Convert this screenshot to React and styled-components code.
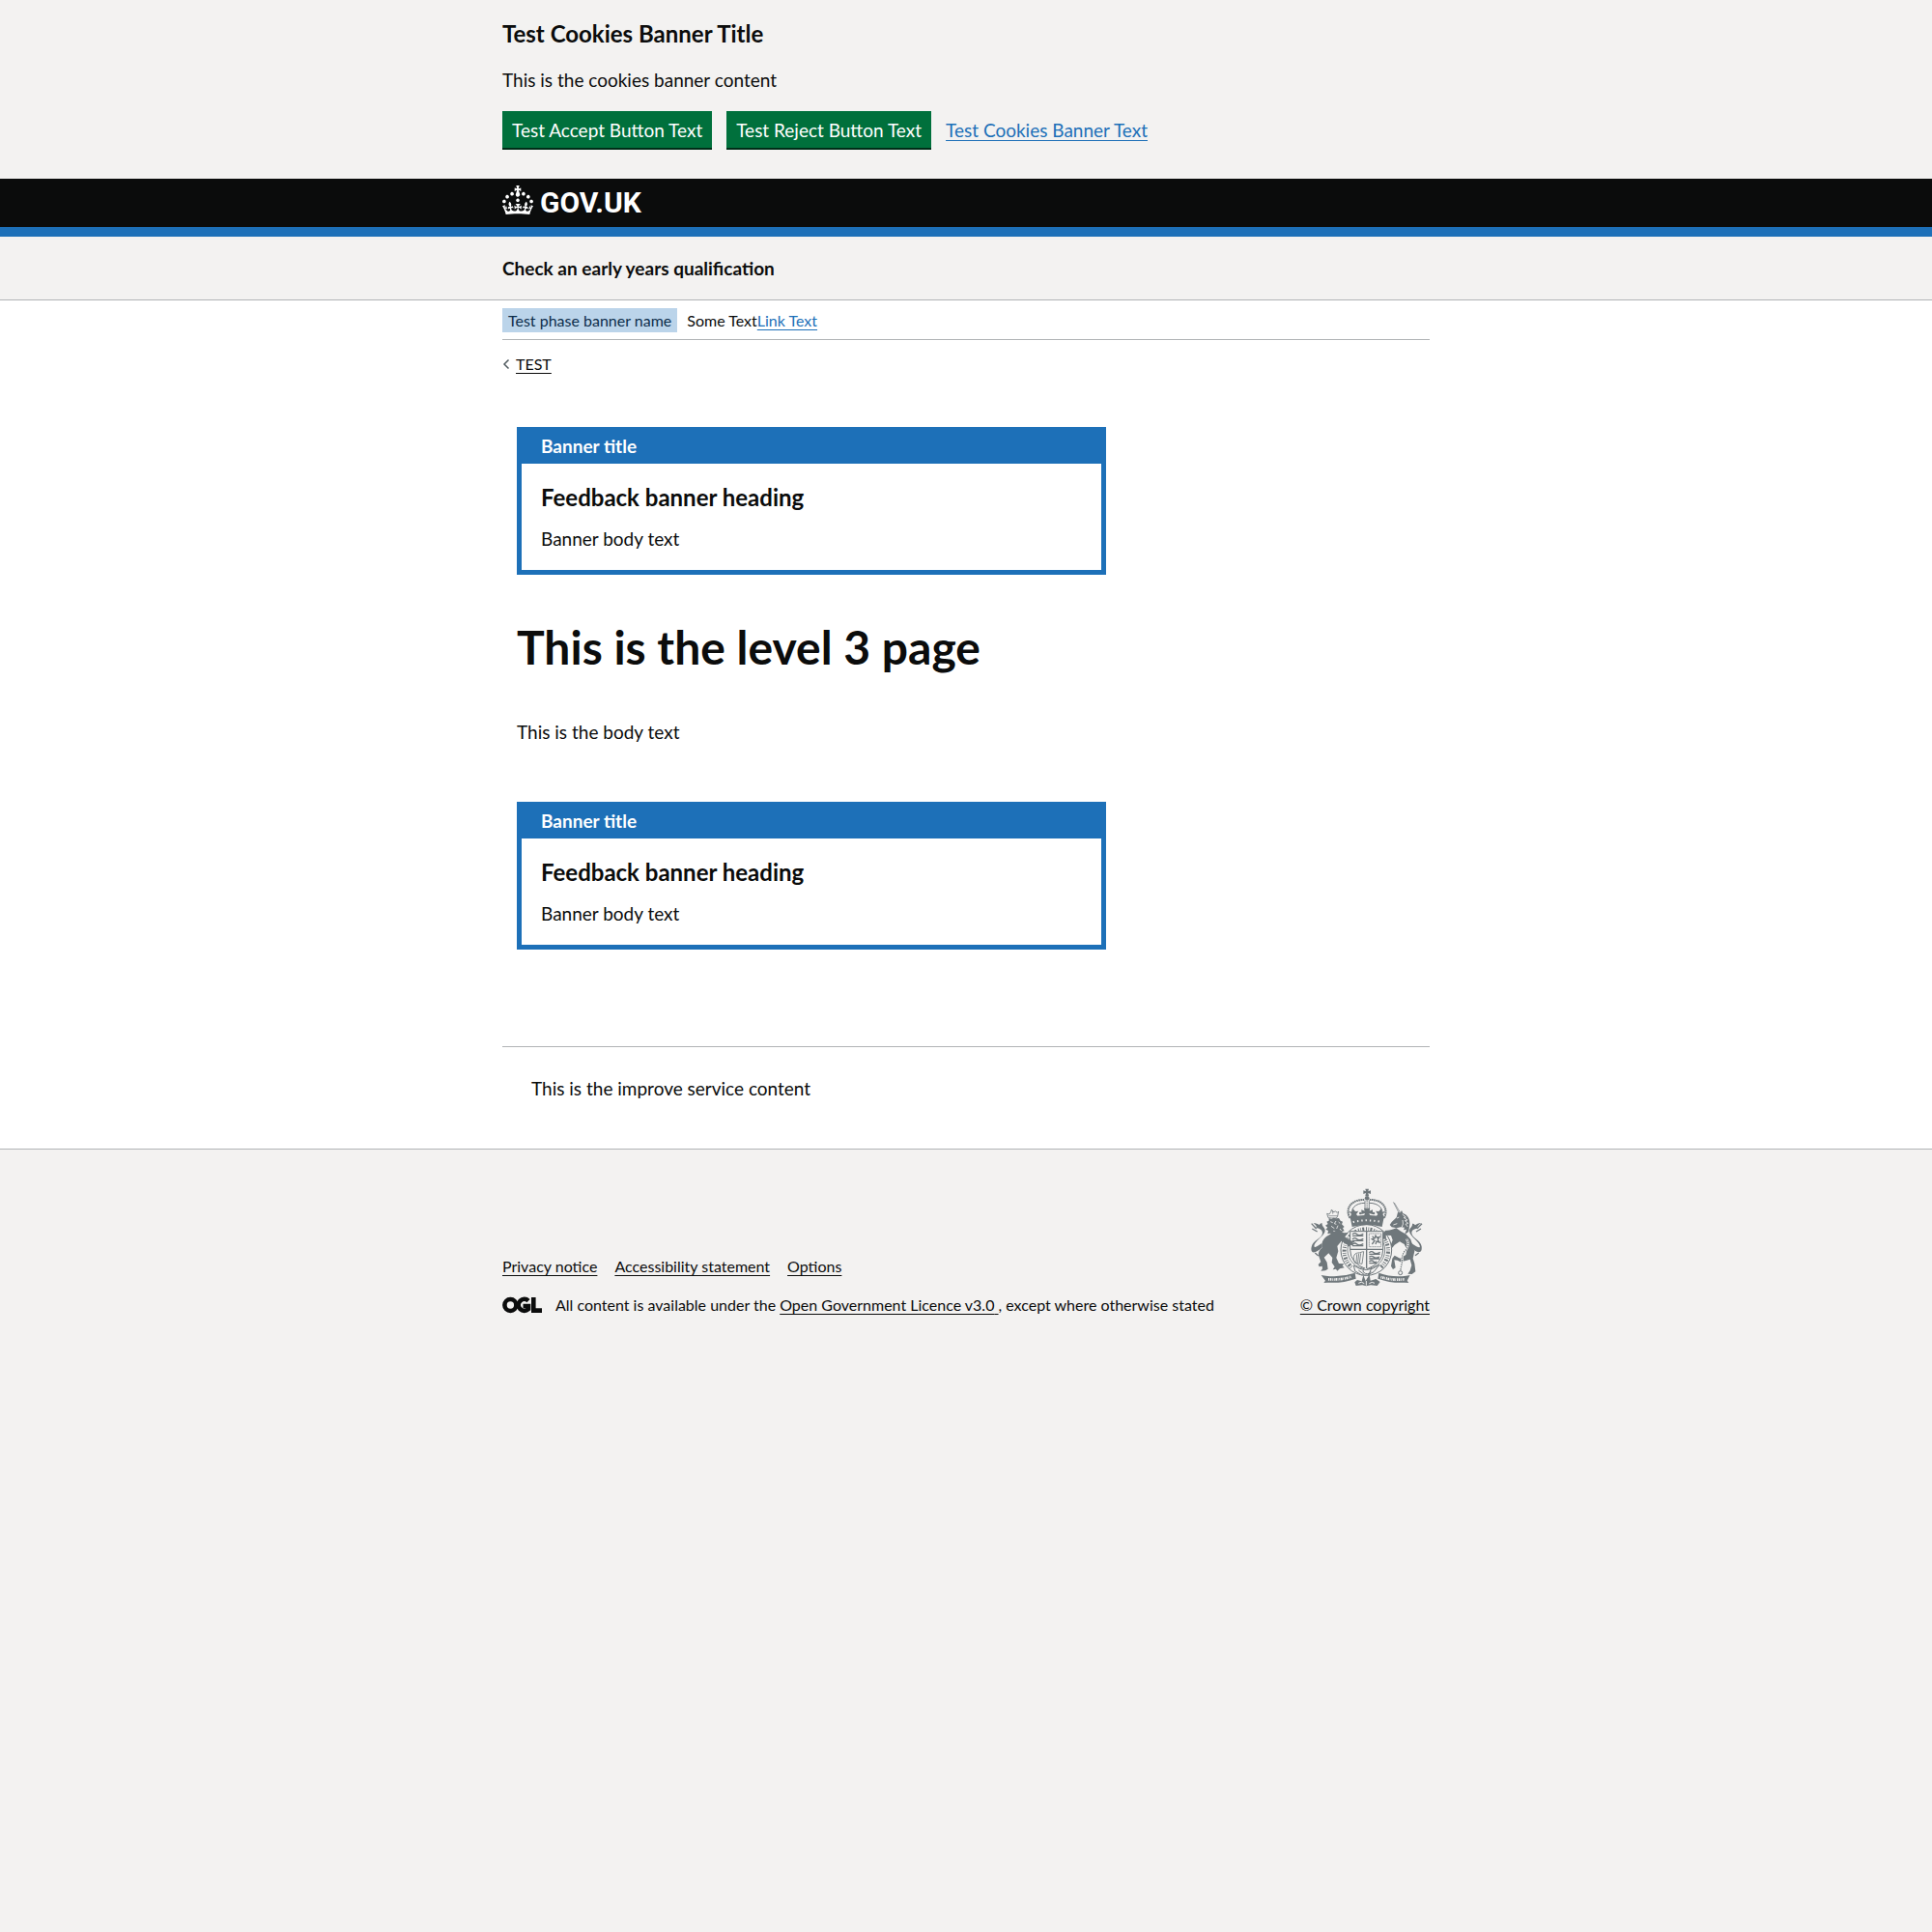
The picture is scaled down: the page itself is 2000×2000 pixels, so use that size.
import React from "react";
import styled, { createGlobalStyle, css } from "styled-components";

const color = {
  ink: "#0b0c0c",
  blue: "#1d70b8",
  grey: "#f3f2f1",
  line: "#b1b4b6",
  green: "#00703c",
  greenDark: "#002d18",
  tag: "#bbd4ea",
  tagInk: "#0c2d4a",
  crest: "#6f777b",
};

const GlobalStyle = createGlobalStyle`
  html { background: ${color.grey}; }
  body {
    margin: 0;
    background: #fff;
    color: ${color.ink};
    font-family: Lato, "Liberation Sans", sans-serif;
    font-size: 19px;
    line-height: 25px;
  }
  *, *::before, *::after { box-sizing: border-box; }
  h1, h2, h3, p, ul { margin: 0; padding: 0; }
`;

const Container = styled.div`
  max-width: 960px;
  margin: 0 auto;
`;

const linkStyle = css`
  color: ${(p) => (p.$plain ? color.ink : color.blue)};
  text-decoration: underline;
  text-decoration-thickness: 1px;
  text-underline-offset: 3px;
`;
const Link = styled.a`${linkStyle}`;

const Heading = styled.h2`
  font-size: 24px;
  line-height: 30px;
  font-weight: 700;
`;

const CookieBanner = styled.section`
  background: ${color.grey};
  padding: 20px 0 32px;
`;
const CookieInner = styled(Container)`
  display: flex;
  flex-direction: column;
  gap: 20px;
`;
const Actions = styled.div`
  display: flex;
  flex-wrap: wrap;
  align-items: center;
  gap: 15px;
`;
const Button = styled.button`
  border: 2px solid transparent;
  border-radius: 0;
  padding: 8px 8px 7px;
  background: ${color.green};
  color: #fff;
  box-shadow: 0 2px 0 ${color.greenDark};
  font: inherit;
  line-height: 19px;
  cursor: pointer;
`;

const Header = styled.header`
  background: ${color.ink};
  border-bottom: 10px solid ${color.blue};
`;
const HeaderInner = styled(Container)`
  display: flex;
  padding: 7px 0;
`;
const Logo = styled.a`
  display: flex;
  align-items: flex-start;
  gap: 7px;
  color: #fff;
  text-decoration: none;
  font-family: Roboto, "Liberation Sans", sans-serif;
  font-size: 30px;
  line-height: 36px;
  font-weight: 700;
`;

const ServiceBar = styled.div`
  background: ${color.grey};
  border-bottom: 1px solid ${color.line};
  padding: 20px 0;
  font-weight: 700;
`;

const PhaseBanner = styled.div`
  display: flex;
  align-items: center;
  gap: 10px;
  padding: 8px 0 7px;
  border-bottom: 1px solid ${color.line};
  font-size: 16px;
`;
const Tag = styled.strong`
  background: ${color.tag};
  color: ${color.tagInk};
  padding: 0 6px;
  font-weight: 400;
`;
const BackLink = styled.a`
  ${linkStyle}
  display: flex;
  width: fit-content;
  align-items: center;
  gap: 6px;
  margin-top: 15px;
  font-size: 16px;
  line-height: 20px;
`;

const Main = styled.main`
  display: flex;
  flex-direction: column;
  align-items: flex-start;
  padding: 55px 15px 100px;
`;
const Title = styled.h1`
  font-size: 48px;
  line-height: 50px;
  font-weight: 700;
  margin: 50px 0;
`;
const Body = styled.p`
  margin-bottom: 60px;
`;
const Notice = styled.section`
  width: 100%;
  max-width: 610px;
  border: 5px solid ${color.blue};
`;
const NoticeHeader = styled.h2`
  background: ${color.blue};
  color: #fff;
  padding: 2px 20px 6px;
  font-size: 19px;
  line-height: 25px;
  font-weight: 700;
`;
const NoticeContent = styled.div`
  display: flex;
  flex-direction: column;
  gap: 15px;
  padding: 20px;
`;
const Improve = styled.section`
  border-top: 1px solid ${color.line};
  padding: 30px 30px 50px;
`;

const Footer = styled.footer`
  background: ${color.grey};
  border-top: 1px solid ${color.line};
  padding: 40px 0;
  font-size: 16px;
  line-height: 20px;
`;
const FooterInner = styled(Container)`
  display: flex;
  justify-content: space-between;
  align-items: flex-end;
`;
const FooterMeta = styled.div`
  display: flex;
  flex-direction: column;
  gap: 20px;
`;
const FooterLinks = styled.ul`
  display: flex;
  flex-wrap: wrap;
  gap: 18px;
  list-style: none;
`;
const Licence = styled.div`
  display: flex;
  align-items: center;
  gap: 14px;
`;
const Crown = styled.a`
  ${linkStyle}
  display: flex;
  flex-direction: column;
  align-items: flex-end;
  gap: 9px;
`;

function CrownIcon() {
  return (
    <svg width="32" height="30" viewBox="0 0 32 30" fill="#fff" aria-hidden="true">
      <path d="M22.6 10.4c-1 .4-2-.1-2.4-1-.4-.9.1-2 1-2.4.9-.4 2 .1 2.4 1s-.1 2-1 2.4m-5.9 6.7c-.9.4-2-.1-2.4-1-.4-.9.1-2 1-2.4.9-.4 2 .1 2.4 1s-.1 2-1 2.4m10.8-3.7c-1 .4-2-.1-2.4-1-.4-.9.1-2 1-2.4.9-.4 2 .1 2.4 1s0 2-1 2.4m3.3 4.8c-1 .4-2-.1-2.4-1-.4-.9.1-2 1-2.4.9-.4 2 .1 2.4 1s-.1 2-1 2.4M17 4.7l2.3 1.2V2.5l-2.3.7-.2-.2.9-3h-3.4l.9 3-.2.2c-.1.1-2.3-.7-2.3-.7v3.4L15 4.7c.1.1.1.2.2.2l-1.3 4c-.1.2-.1.4-.1.6 0 1.1.8 2 1.9 2.2h.7c1-.2 1.9-1.1 1.9-2.1 0-.2 0-.4-.1-.6l-1.3-4c-.1-.2 0-.2.1-.3m-7.6 5.7c.9.4 2-.1 2.4-1 .4-.9-.1-2-1-2.4-.9-.4-2 .1-2.4 1s0 2 1 2.4m-5 3c.9.4 2-.1 2.4-1 .4-.9-.1-2-1-2.4-.9-.4-2 .1-2.4 1s.1 2 1 2.4m-3.2 4.8c.9.4 2-.1 2.4-1 .4-.9-.1-2-1-2.4-.9-.4-2 .1-2.4 1s0 2 1 2.4m14.8 11c4.4 0 8.6.3 12.3.8 1.1-4.5 2.4-7 3.7-8.8l-2.5-.9c.2 1.3.3 1.9 0 2.7-.4-.4-.8-1.1-1.1-2.3l-1.2 4c.7-.5 1.3-.8 2-.9-1.1 2.5-2.6 3.1-3.5 3-1.1-.2-1.7-1.2-1.5-2.1.3-1.2 1.5-1.5 2.1-.1 1.1-2.3-.8-3-2-2.3 1.9-1.9 2.1-3.5.6-5.6-2.1 1.6-2.1 3.2-1.2 5.5-1.2-1.4-3.2-.6-2.5 1.6.9-1.4 2.1-.5 1.9.8-.2 1.1-1.7 2.1-3.5 1.9-2.7-.2-2.9-2.1-2.9-3.6.7-.1 1.9.5 2.9 1.9l.4-4.3c-1.1 1.1-2.1 1.4-3.2 1.4.4-1.2 2.1-3 2.1-3h-5.4s1.7 1.9 2.1 3c-1.1 0-2.1-.2-3.2-1.4l.4 4.3c1-1.4 2.2-2 2.9-1.9-.1 1.5-.2 3.4-2.9 3.6-1.9.2-3.4-.8-3.5-1.9-.2-1.3 1-2.2 1.9-.8.7-2.3-1.2-3-2.5-1.6.9-2.2.9-3.9-1.2-5.5-1.5 2-1.3 3.7.6 5.6-1.2-.7-3.1 0-2 2.3.6-1.4 1.8-1.1 2.1.1.2.9-.3 1.9-1.5 2.1-.9.2-2.4-.5-3.5-3 .6 0 1.2.3 2 .9l-1.2-4c-.3 1.1-.7 1.9-1.1 2.3-.3-.8-.2-1.4 0-2.7l-2.9.9C1.3 23 2.6 25.5 3.7 30c3.7-.5 7.9-.8 12.3-.8" />
    </svg>
  );
}

function OglLogo() {
  return (
    <svg width="41" height="18" viewBox="0 0 41 18" role="img" aria-label="OGL">
      <g fill="none" stroke={color.ink} strokeWidth="4.6">
        <circle cx="8.4" cy="9" r="6" />
        <path d="M27 4.6A6 6 0 1 0 27 13.2V10H21.5" />
        <path d="M32.3 1V14.6H41" />
      </g>
    </svg>
  );
}

function RoyalArms() {
  return (
    <svg width="131" height="102" viewBox="58 58 393 306" fill={color.crest} stroke={color.crest} strokeWidth="0" aria-hidden="true">
      {/* imperial crown */}
      <path d="M251 60h11l-2 8 8-3v11l-8-3 2 9h-11l2-9-8 3V65l8 3z" />
      <circle cx="256.500" cy="89" r="7" />
      <g fill="none">
        <path d="M203 150C186 118 212 92 249 94M310 150c15-32-9-58-46-56" strokeWidth="6" strokeDasharray="5 1.500" />
        <path d="M212 145c-9-22 7-41 38-41M301 145c9-22-7-41-38-41" strokeWidth="3" />
        <path d="M250 96v36M263 96v36" strokeWidth="2.500" />
        <path d="M256.500 98v32" strokeWidth="4" strokeDasharray="3 3" />
      </g>
      <path d="M204 149q52-15 105 0l-6 29q-46-12-93 0z" />
      <path d="M213 163q44-10 87 0" fill="none" stroke={color.grey} strokeWidth="6" strokeDasharray="4 9" />
      <path d="M245 149l5-13-11 3v-14l11 4-3-9h19l-3 9 11-4v14l-11-3 5 13zM202 152l6-14-9-9 11 3 2-11 8 9 10-1-7 10 9 11zM311 152l-6-14 9-9-11 3-2-11-8 9-10-1 7 10-9 11z" />
      <circle cx="236" cy="136" r="4" />
      <circle cx="277" cy="136" r="4" />

      {/* garter */}
      <g fill="none">
        <circle cx="254" cy="250" r="79" strokeWidth="3" />
        <circle cx="254" cy="250" r="58" strokeWidth="2.500" />
        <path d="M208 303A68 68 0 1 1 300 303" strokeWidth="12" strokeDasharray="2 4 6 5 3 4" />
      </g>

      {/* quartered shield */}
      <path d="M204 192h102v58q0 40-51 60-51-20-51-60z" fill={color.grey} strokeWidth="3" />
      <path d="M253 192h4v116h-4zM205 246h100v4H205z" />
      <g fill="none" strokeWidth="3">
        <path d="M211 201q8-6 14 0t20-1M211 206h34M211 216q8-6 14 0t20-1M211 221h34M211 232q8-6 14 0t20-1M211 237h34" strokeWidth="4" />
        <path d="M263 199h37v41h-37z" strokeWidth="2" strokeDasharray="4 1" />
        <path d="M272 232l8-11-8-5 9-3 2-8 5 7 7-3-5 9 5 8-9-3-3 9M273 207l5 6" strokeWidth="4" />
        <path d="M219 290c-8-16-4-30 9-31 8 0 13-4 18-4l-5 38zM225 263l-2 25M231 261l-3 28M237 260l-4 30" strokeWidth="2.500" />
        <path d="M263 258q8-6 14 0t20-1M263 263h34M263 272q8-6 14 0t18-1M263 277h32M263 286q8-6 14 0t8-1M263 291h24" strokeWidth="4" />
      </g>

      {/* lion */}
      <path d="M147 151l-11-1-4-13 7 2 5-7 2-7 5 7 8-2 5 4 4-4-3 15-4 6z" fill={color.grey} strokeWidth="2.500" />
      <path d="M150 126v12M137 144h28" strokeWidth="2" />
      <path d="M138 151l8 3 6-4 9 2 8-1 5 8 7 3-3 8 8 8-5 4 5 9-8 2-2 9-8-2-6 8-8-5-8 3-3-8-9 2 2-10-8-4 6-6-7-6 8-5-4-7 7-3z" />
      <path d="M143 162l7 3M160 160l-5 8 6 2M168 163l5 5M145 176l10 7M166 174l-4 10M152 191l9 3M172 184l5 6" fill="none" stroke={color.grey} strokeWidth="2.500" />
      <path d="M137 204c-15 7-24 22-20 39-8 5-13 14-11 24l7 20-8 8 3 7 9-2 1 8-5 7 14-1 8-5-3-21-9-15 14-13 12 14-2 15 9 13-6 9 10-2 4 6 8-7 14-3-6-6 5-6-16-1-8-18 6-20-3-16 13-16 17 10 4 9 7-7 10 3-4-8 8-5-13-3-19-12 11-13-14 1-18-11z" />
      <path d="M117 242c-20 20-38 22-33-2 4-20 34-26 34-43 0-9-9-15-22-15 6-3 4-8-6-16 8 1 13 3 18 6 3-4 6-6 9-5-1 6 2 9 6 14 9 12-4 24-15 34-12 11-18 20-15 25 3 4 14-5 23-11z" />
      <path d="M84 168l15 16M86 184l16 9M95 259l10 9" strokeWidth="4" fill="none" />

      {/* unicorn */}
      <path d="M338 101l17 33M341 103l18 30" fill="none" strokeWidth="2" />
      <path d="M352 133l8 1 4-7 4 9c14 5 21 16 21 32l-3 25-13 9 6-16-9 2 3-8-12-1-13 3-15-3-6-7 6-9 15-14z" />
      <path d="M349 151l7-3M338 172l12-4M366 139l11 9-7 1 12 8-8 2 10 8-8 3 7 8M364 180q7-10 3-23" fill="none" stroke={color.grey} strokeWidth="2.500" />
      <path d="M347 182c-12 5-22 8-33 7l-7 8-1 17 10 4-1-14 16 1 5 14-6 15 5 9 7-9 16-10 14 8 8 16-3 17-18 11-17-9-7 9-4 24 6 10 8-5-4-24 10 1 9 5 17-4 13-4 5 18-5 17-7 10 13 1 11-8-3-25-5-16 5-22-6-18-6-19-14-16-16-9z" />
      <path d="M389 238c20 23 40 26 37 1-3-20-31-26-31-42 0-9 8-14 21-14-6-4-3-8 9-17-9 1-15 3-19 7-3-4-6-5-9-5 1 6-2 9-6 14-9 12 3 24 14 34 11 11 18 21 15 25-3 4-18-6-28-14z" />
      <path d="M427 168l-15 15M424 184l-15 9M417 259l-11 8" strokeWidth="4" fill="none" />
      <path d="M379 215q11 17-2 35-14 13-11 34l-6 31" fill="none" stroke={color.grey} strokeWidth="7" />
      <path d="M379 215q11 17-2 35-14 13-11 34l-6 31" fill="none" strokeWidth="4" strokeDasharray="4 3" />
      <circle cx="360" cy="321" r="6" fill="none" strokeWidth="3" />

      {/* motto ribbon and buckle */}
      <path d="M114 328l14 2q46 6 91-9l3 18q-43 15-88 12l-12 1 5-7zM390 328l-12 2q-44 6-85-9l-3 18q43 15 84 12l12 1-5-7z" />
      <g fill="none" stroke={color.grey} strokeWidth="8" strokeDasharray="3 2 5 2 2 3">
        <path d="M136 341q38 3 72-8" />
        <path d="M299 334q36 11 74 7" />
      </g>
      <path d="M215 298q38 28 80-2l-18 22-19 10-20-1-19-12zM230 313l17 13M270 306l-9 25M249 305q-11 12 2 18 14 4 17-7" fill={color.grey} strokeWidth="3" />
      <path d="M218 350l8-7 14 4 5-19 7 18 12-20 3 19 17-5 13 9-9 12-20-2-14 3-12-3-20 2z" />
      <path d="M230 353q9-7 18 1M263 354q9-7 17-1M254 346v14" fill="none" stroke={color.grey} strokeWidth="3" />
    </svg>
  );
}

function FeedbackBanner({ id }) {
  return (
    <Notice aria-labelledby={id}>
      <NoticeHeader id={id}>Banner title</NoticeHeader>
      <NoticeContent>
        <Heading as="h3">Feedback banner heading</Heading>
        <p>Banner body text</p>
      </NoticeContent>
    </Notice>
  );
}

export default function App() {
  return (
    <>
      <GlobalStyle />
      <CookieBanner aria-label="Cookies">
        <CookieInner>
          <Heading>Test Cookies Banner Title</Heading>
          <p>This is the cookies banner content</p>
          <Actions>
            <Button type="button">Test Accept Button Text</Button>
            <Button type="button">Test Reject Button Text</Button>
            <Link href="#cookies">Test Cookies Banner Text</Link>
          </Actions>
        </CookieInner>
      </CookieBanner>
      <Header>
        <HeaderInner>
          <Logo href="#home">
            <CrownIcon />
            <span>GOV.UK</span>
          </Logo>
        </HeaderInner>
      </Header>
      <ServiceBar>
        <Container>Check an early years qualification</Container>
      </ServiceBar>
      <Container>
        <PhaseBanner>
          <Tag>Test phase banner name</Tag>
          <span>
            Some Text<Link href="#feedback">Link Text</Link>
          </span>
        </PhaseBanner>
        <BackLink href="#back" $plain>
          <svg width="8" height="12" viewBox="0 0 8 12" fill="none" stroke="#505a5f" strokeWidth="1.5" aria-hidden="true">
            <path d="M6.500 1.500L2 6l4.500 4.500" />
          </svg>
          TEST
        </BackLink>
        <Main>
          <FeedbackBanner id="banner-top" />
          <Title>This is the level 3 page</Title>
          <Body>This is the body text</Body>
          <FeedbackBanner id="banner-bottom" />
        </Main>
        <Improve>
          <p>This is the improve service content</p>
        </Improve>
      </Container>
      <Footer>
        <FooterInner>
          <FooterMeta>
            <FooterLinks>
              <li><Link href="#privacy" $plain>Privacy notice</Link></li>
              <li><Link href="#accessibility" $plain>Accessibility statement</Link></li>
              <li><Link href="#options" $plain>Options</Link></li>
            </FooterLinks>
            <Licence>
              <OglLogo />
              <span>
                All content is available under the{" "}
                <Link href="#licence" $plain>Open Government Licence v3.0{" "}</Link>, except where otherwise stated
              </span>
            </Licence>
          </FooterMeta>
          <Crown href="#copyright" $plain>
            <RoyalArms />
            <span>© Crown copyright</span>
          </Crown>
        </FooterInner>
      </Footer>
    </>
  );
}
